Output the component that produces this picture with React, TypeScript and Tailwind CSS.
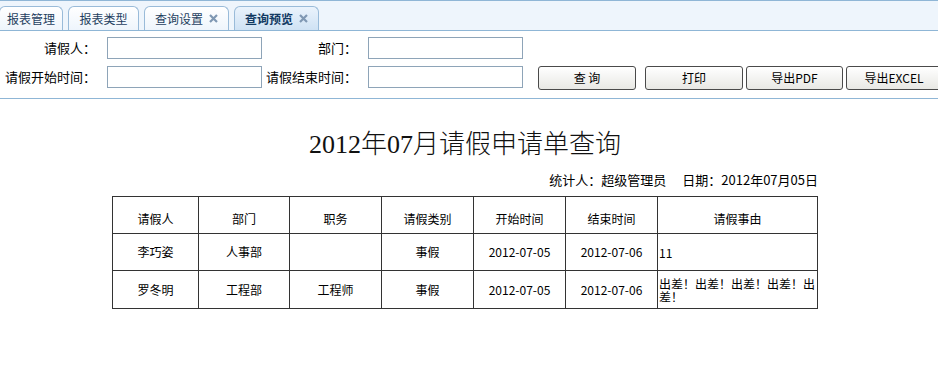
import React from 'react'

const tabs = [
  { label: '报表管理', close: false, active: false, w: 'w-[64px]' },
  { label: '报表类型', close: false, active: false, w: 'w-[71px]' },
  { label: '查询设置', close: true, active: false, w: 'w-[85px]' },
  { label: '查询预览', close: true, active: true, w: 'w-[85px]' },
]

const cols = [
  { title: '请假人', w: 'w-[86px]' },
  { title: '部门', w: 'w-[91px]' },
  { title: '职务', w: 'w-[92px]' },
  { title: '请假类别', w: 'w-[92px]' },
  { title: '开始时间', w: 'w-[92px]' },
  { title: '结束时间', w: 'w-[92px]' },
  { title: '请假事由', w: 'w-[160px]' },
]

const rows = [
  ['李巧姿', '人事部', '', '事假', '2012-07-05', '2012-07-06', '11'],
  ['罗冬明', '工程部', '工程师', '事假', '2012-07-05', '2012-07-06', '出差！出差！出差！出差！出差！'],
]

const sans = "font-['Noto_Sans_CJK_SC',sans-serif]"
const field = 'shrink-0 w-[155px] h-[22px] border border-[#8ea4b8] outline-none'

function Btn({ label, w }: { label: string; w: string }) {
  return (
    <button
      className={`${w} shrink-0 h-[24px] rounded-[3px] border border-[#4a4a4a] bg-gradient-to-b from-white to-[#e8e8e4] text-[12px] leading-none text-black`}
    >
      {label}
    </button>
  )
}

export default function App() {
  return (
    <div className={`w-[938px] h-[366px] overflow-hidden bg-white ${sans}`}>
      {/* tab strip */}
      <div className="h-[31px] border-t border-b border-[#8fb6d6] bg-[#eef5fc] flex items-end gap-[5px] -ml-[1px]">
        {tabs.map((t) => (
          <div
            key={t.label}
            className={`${t.w} shrink-0 h-[24px] rounded-t-[6px] border border-b-0 border-[#99bbd9] flex items-center justify-center gap-[6px] text-[12px] ${
              t.active
                ? 'bg-gradient-to-b from-[#eaf3fc] to-[#cfe2f4] font-bold text-[#123a63]'
                : 'bg-gradient-to-b from-white to-[#eef5fc] text-[#1f3f60]'
            }`}
          >
            <span>{t.label}</span>
            {t.close && (
              <svg width="9" height="9" viewBox="0 0 9 9">
                <path d="M1 1L8 8M8 1L1 8" stroke="#7f98b3" strokeWidth="2.2" />
              </svg>
            )}
          </div>
        ))}
      </div>

      {/* query form */}
      <div className="h-[68px] border-b border-[#8fb6d6] pt-[6px] flex flex-col gap-[7px] text-[13px] text-black">
        <div className="flex items-center">
          <span className="shrink-0 w-[96px] text-right">请假人：</span>
          <input className={`ml-[11px] ${field}`} />
          <span className="shrink-0 w-[95px] text-right">部门：</span>
          <input className={`ml-[11px] ${field}`} />
        </div>
        <div className="flex items-start">
          <span className="shrink-0 w-[96px] text-right leading-[22px] whitespace-nowrap">请假开始时间：</span>
          <input className={`ml-[11px] ${field}`} />
          <span className="shrink-0 w-[95px] text-right leading-[22px] whitespace-nowrap">请假结束时间：</span>
          <input className={`ml-[11px] ${field}`} />
          <div className="ml-[15px] flex gap-[3px] shrink-0">
            <Btn label="查 询" w="w-[98px] mr-[6px]" />
            <Btn label="打印" w="w-[98px]" />
            <Btn label="导出PDF" w="w-[97px]" />
            <Btn label="导出EXCEL" w="w-[96px]" />
          </div>
        </div>
      </div>

      {/* report */}
      <div className="ml-[112px] w-[706px]">
        <h1 className="mt-[30px] text-center text-[26px] leading-[32px] text-[#111] font-['Liberation_Serif','Noto_Sans_CJK_SC',serif] font-light">
          2012年07月请假申请单查询
        </h1>
        <div className="mt-[10px] text-right text-[13px] leading-[18px] text-black whitespace-pre">
          统计人：超级管理员　 日期：2012年07月05日
        </div>
        <table className="mt-[7px] border-collapse text-[12px] text-black">
          <thead>
            <tr className="h-[37px]">
              {cols.map((c) => (
                <th key={c.title} className={`${c.w} border border-[#333] font-normal pt-[8px]`}>
                  {c.title}
                </th>
              ))}
            </tr>
          </thead>
          <tbody>
            {rows.map((r, i) => (
              <tr key={i} className={i === 0 ? 'h-[37px]' : 'h-[38px]'}>
                {r.map((v, j) => (
                  <td
                    key={j}
                    className={`border border-[#333] ${
                      j === 6 ? 'text-left pl-[1px] leading-[13px]' : 'text-center'
                    }`}
                  >
                    {v}
                  </td>
                ))}
              </tr>
            ))}
          </tbody>
        </table>
      </div>
    </div>
  )
}
